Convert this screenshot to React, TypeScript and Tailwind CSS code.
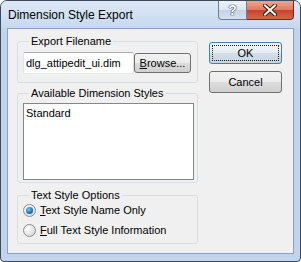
import type { ReactNode } from 'react'

const face = "font-['Tahoma','Liberation_Sans',sans-serif] text-[11px] leading-[13px] text-black"

function Button({ children, isDefault, className }: { children: ReactNode; isDefault?: boolean; className: string }) {
  return (
    <div
      className={`relative flex items-center justify-center rounded-[3px] border ${
        isDefault
          ? 'border-[#3c7fb1] bg-[linear-gradient(#f1f5f9_0%,#e6ecf2_50%,#d5dee7_50%,#c9d4df_100%)]'
          : 'border-[#707070] bg-[linear-gradient(#f2f2f2_0%,#ebebeb_50%,#dddddd_50%,#cfcfcf_100%)]'
      } ${className}`}
    >
      {isDefault && <div className="absolute inset-[2px] border border-dotted border-[#1a1a1a]" />}
      {children}
    </div>
  )
}

function Group({ title, className, children }: { title: string; className: string; children: ReactNode }) {
  return (
    <fieldset className={`rounded-[3px] border border-[#d5dfe5] ${className}`}>
      <legend className="ml-[6px] px-[2px] leading-[13px]">{title}</legend>
      {children}
    </fieldset>
  )
}

function Radio({ checked, label }: { checked?: boolean; label: ReactNode }) {
  return (
    <div className="flex items-center gap-[4px]">
      <div className="flex h-[13px] w-[13px] items-center justify-center rounded-full border border-[#8e8f8f] bg-[radial-gradient(circle_at_35%_35%,#ffffff,#e2e2e2_60%,#c4c4c4)]">
        {checked && (
          <div className="h-[7px] w-[7px] rounded-full bg-[radial-gradient(circle_at_40%_35%,#7cc8f5,#1f74bd_55%,#0b3f78)]" />
        )}
      </div>
      <span>{label}</span>
    </div>
  )
}

function TitleBar() {
  return (
    <div className="flex h-[27px] items-start rounded-t-[6px] bg-[linear-gradient(#dce8f6,#c7d9ef)]">
      <div className="pl-[7px] pt-[7px] font-['Segoe_UI','Liberation_Sans',sans-serif] text-[12px] leading-[15px] text-black">
        Dimension Style Export
      </div>
      <div className="ml-auto mr-[6px] flex">
        <div className="flex h-[19px] w-[29px] items-center justify-center rounded-bl-[4px] border border-t-0 border-[#6d7f98] bg-[linear-gradient(#edf2f9_0%,#dbe5f2_50%,#c4d3e6_50%,#d3e0ef_100%)]">
          <span className="font-['Liberation_Sans',sans-serif] text-[14px] font-bold leading-[14px] text-white [text-shadow:0_0_1px_#2b3c55,0_0_1px_#2b3c55,0_0_1px_#2b3c55]">
            ?
          </span>
        </div>
        <div className="flex h-[19px] w-[47px] items-center justify-center rounded-br-[4px] border border-l-0 border-t-0 border-[#6b2a1e] bg-[linear-gradient(#e9a592_0%,#dd7a62_50%,#c7432a_50%,#d2664a_100%)]">
          <svg width="14" height="12" viewBox="0 0 14 12">
            <path d="M2 1.5 L12 10.5 M12 1.5 L2 10.5" stroke="#3d1a12" strokeWidth="4" strokeLinecap="square" />
            <path d="M2 1.5 L12 10.5 M12 1.5 L2 10.5" stroke="#ffffff" strokeWidth="2" strokeLinecap="square" />
          </svg>
        </div>
      </div>
    </div>
  )
}

export default function App() {
  return (
    <div className="flex h-[262px] w-[301px] flex-col rounded-t-[7px] rounded-b-[4px] border border-[#3d4a5c] bg-[#c1d4eb]">
      <TitleBar />
      <div className={`mx-[6px] flex h-[226px] gap-[11px] border border-[#8ba1bd] bg-[#f0f0f0] pl-[9px] pt-[6px] ${face}`}>
        <div className="flex w-[181px] flex-col">
          <Group title="Export Filename" className="h-[48px] pl-[5px] pt-[4px]">
            <div className="flex">
              <div className="flex h-[22px] w-[111px] items-center rounded-[2px] border border-[#abadb3] border-b-[#e3e9ef] border-l-[#e2e3ea] border-r-[#dbdfe6] bg-white pl-[2px]">
                dlg_attipedit_ui.dim
              </div>
              <Button className="mt-[1px] h-[20px] w-[57px]">
                <span>
                  <u>B</u>rowse...
                </span>
              </Button>
            </div>
          </Group>
          <Group title="Available Dimension Styles" className="mt-[4px] h-[96px] pl-[5px] pt-[3px]">
            <div className="h-[77px] w-[171px] border border-[#828790] bg-white pl-[2px] pt-[3px]">Standard</div>
          </Group>
          <Group title="Text Style Options" className="mt-[6px] h-[55px] pl-[5px] pt-[2px]">
            <div className="flex flex-col gap-[7px]">
              <Radio checked label={<><u>T</u>ext Style Name Only</>} />
              <Radio label={<><u>F</u>ull Text Style Information</>} />
            </div>
          </Group>
        </div>
        <div className="flex w-[73px] flex-col gap-[7px] pt-[7px]">
          <Button isDefault className="h-[22px]">OK</Button>
          <Button className="h-[22px]">Cancel</Button>
        </div>
      </div>
    </div>
  )
}
